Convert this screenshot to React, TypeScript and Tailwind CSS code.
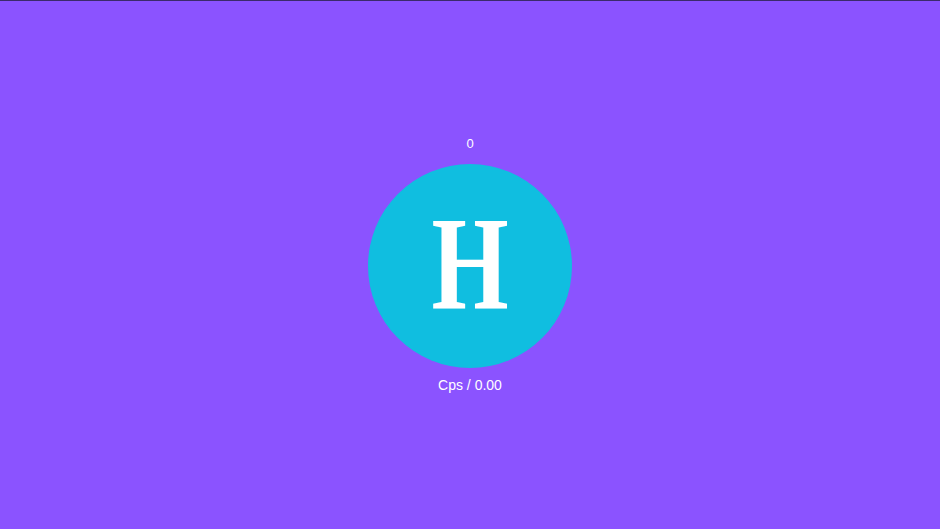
export default function App() {
  return (
    <div className="flex h-[529px] w-[940px] flex-col items-center border-t border-[#3b2a6b] bg-[#8b53ff] font-['Liberation_Sans',Arial,sans-serif] text-white">
      <div className="mt-[135px] text-[13px] leading-[16px]">0</div>
      <button
        type="button"
        className="mt-[12px] flex h-[204px] w-[204px] items-center justify-center rounded-full bg-[#10bee0]"
      >
        <span className="block -translate-y-[3px] scale-x-[0.74] font-['Liberation_Serif','Times_New_Roman',serif] text-[134px] font-bold leading-none text-white">
          H
        </span>
      </button>
      <div className="mt-[8px] text-[14px] leading-[18px]">Cps / 0.00</div>
    </div>
  );
}
